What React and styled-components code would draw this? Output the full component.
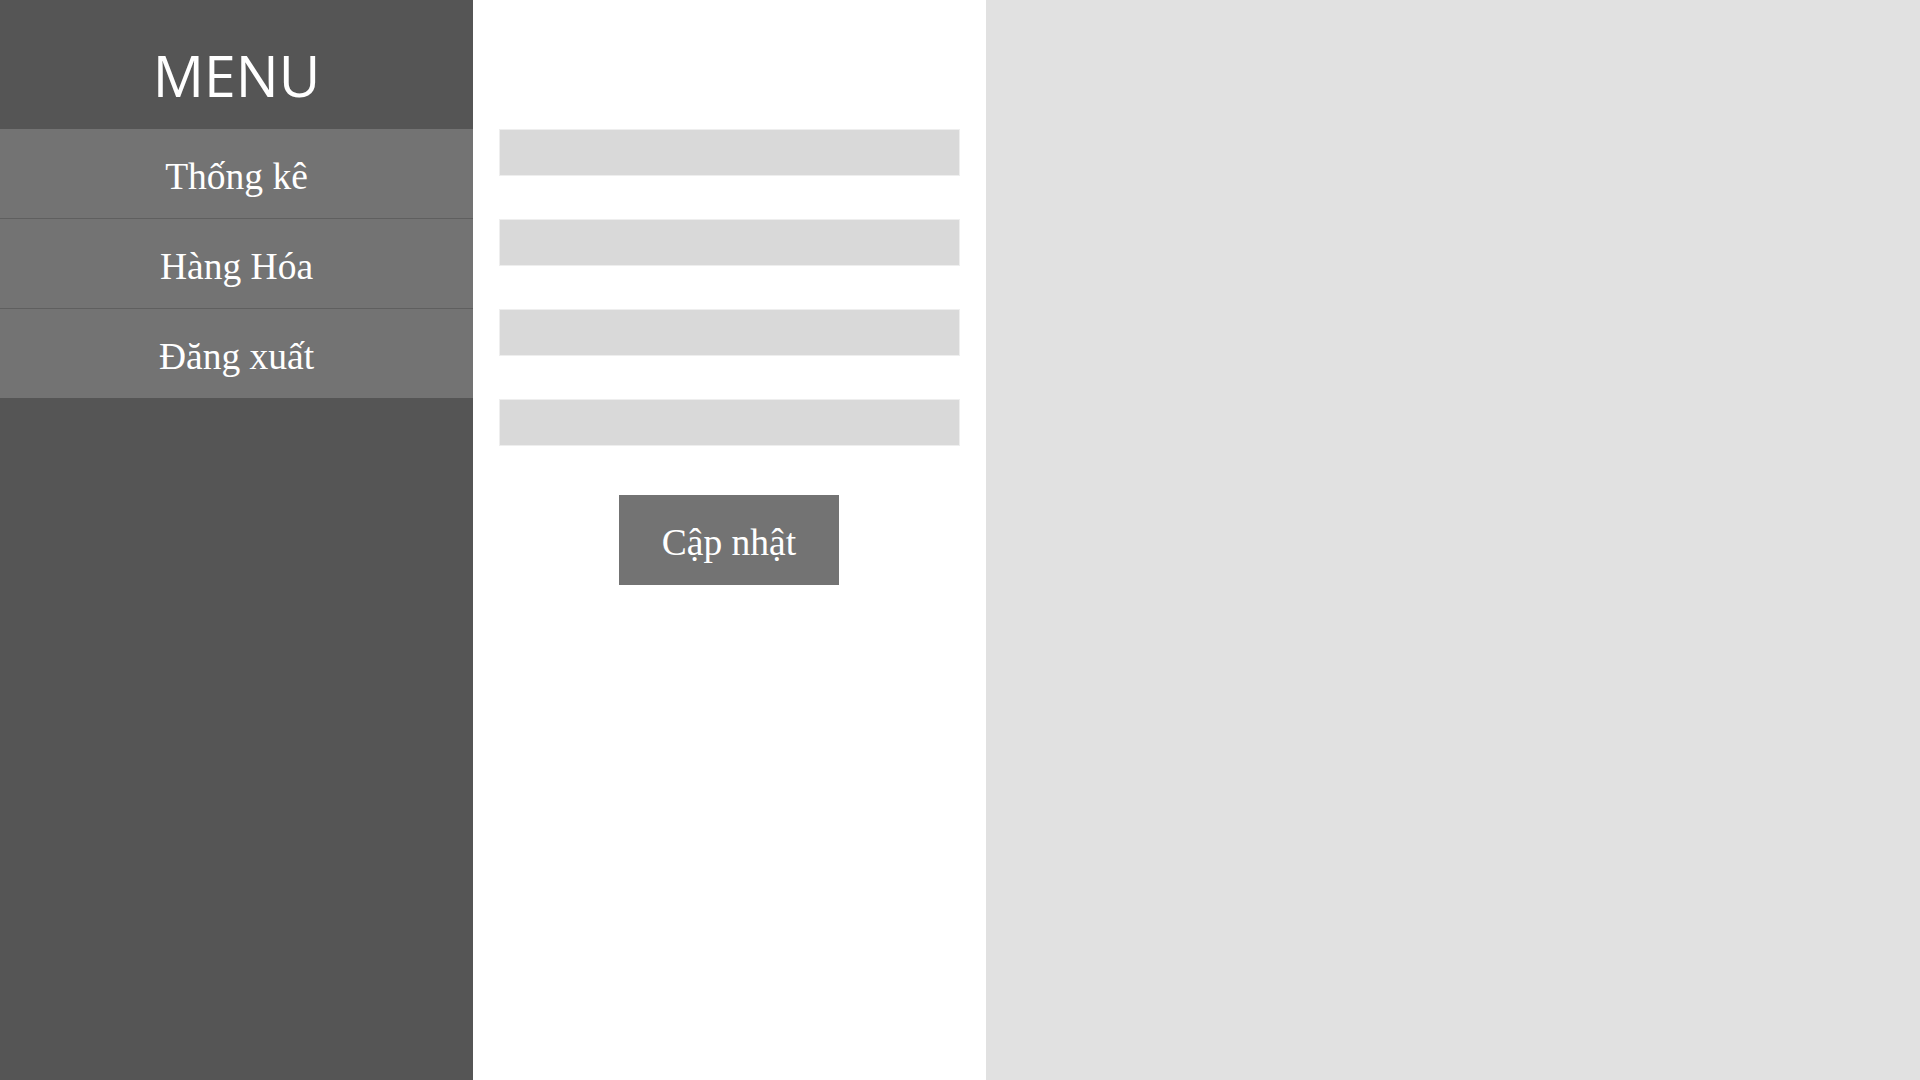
import styled, { createGlobalStyle } from "styled-components";

const GlobalStyle = createGlobalStyle`
  html, body {
    margin: 0;
    padding: 0;
  }
  body {
    font-family: "Liberation Serif", "Times New Roman", serif;
  }
`;

const Page = styled.div`
  display: flex;
  width: 100%;
  height: 100vh;
  overflow: hidden;
`;

// sidebar
const Sidebar = styled.nav`
  width: 473px;
  flex-shrink: 0;
  background: #555555;
  display: flex;
  flex-direction: column;
`;

const MenuTitle = styled.h1`
  margin: 0;
  height: 129px;
  box-sizing: border-box;
  padding-top: 36px;
  text-align: center;
  font-family: "Open Sans", sans-serif;
  font-weight: 400;
  font-size: 57px;
  line-height: normal;
  color: #ffffff;
`;

const MenuItem = styled.div`
  height: 84px;
  padding-top: 5px;
  display: flex;
  align-items: center;
  justify-content: center;
  background: #737373;
  border-top: ${(props) => (props.first ? "none" : "1px solid #5f5f5f")};
  color: #ffffff;
  font-size: 37.5px;
  cursor: pointer;
`;

// form column
const FormPanel = styled.section`
  width: 513px;
  flex-shrink: 0;
  background: #ffffff;
  box-sizing: border-box;
  padding: 129px 1px 0 0;
  display: flex;
  flex-direction: column;
  align-items: center;
`;

const Field = styled.input`
  width: 461px;
  height: 47px;
  box-sizing: border-box;
  margin: 0 0 43px 0;
  padding: 0 12px;
  border: 1px solid #eeeeee;
  background: #d9d9d9;
  outline: none;
  font-family: "Liberation Serif", serif;
  font-size: 20px;
`;

const SubmitButton = styled.button`
  width: 220px;
  height: 90px;
  margin-top: 6px;
  padding: 5px 0 0 0;
  border: none;
  background: #737373;
  color: #ffffff;
  font-family: "Liberation Serif", serif;
  font-size: 37.5px;
  cursor: pointer;
`;

const Preview = styled.section`
  flex: 1;
  background: #e1e1e1;
`;

const menuItems = ["Thống kê", "Hàng Hóa", "Đăng xuất"];

export default function App() {
  return (
    <>
      <GlobalStyle />
      <Page>
        <Sidebar>
          <MenuTitle>MENU</MenuTitle>
          {menuItems.map((m, i) => (
            <MenuItem key={m} first={i === 0}>
              {m}
            </MenuItem>
          ))}
        </Sidebar>
        <FormPanel>
          <Field />
          <Field />
          <Field />
          <Field />
          <SubmitButton type="button">Cập nhật</SubmitButton>
        </FormPanel>
        <Preview />
      </Page>
    </>
  );
}
